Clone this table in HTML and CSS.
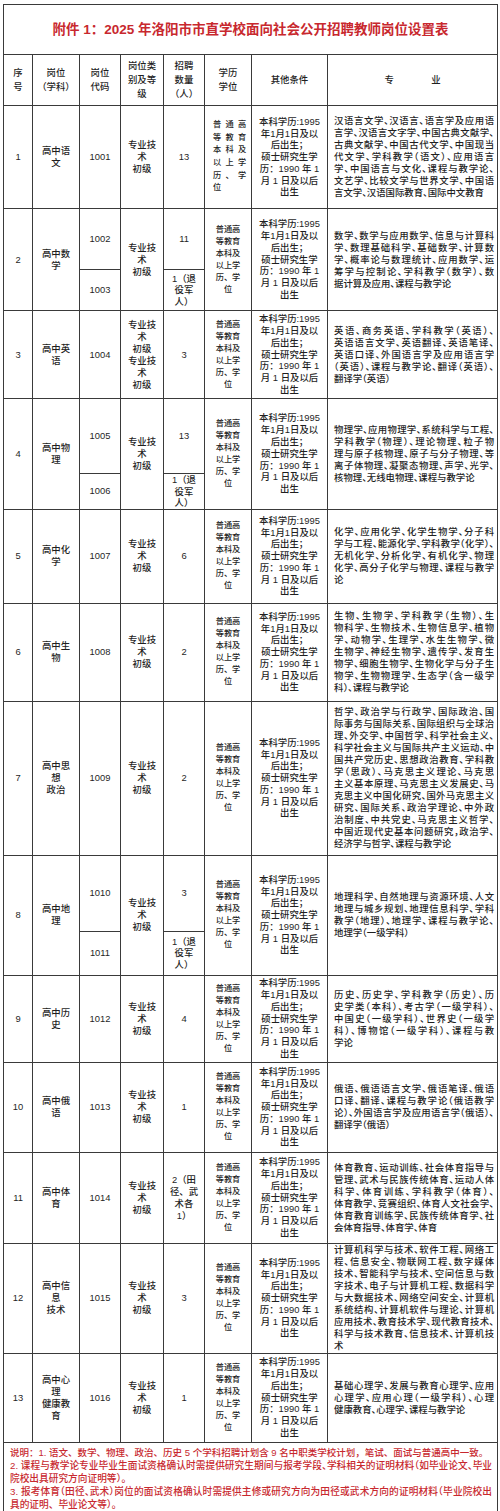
FILE: index.html
```html
<!DOCTYPE html>
<html lang="zh-CN">
<head>
<meta charset="utf-8">
<title>岗位设置表</title>
<link rel="stylesheet" href="styles.css">
</head>
<body>
<div class="page">
<table class="t">
<colgroup>
<col class="c1"><col class="c2"><col class="c3"><col class="c4"><col class="c5"><col class="c6"><col class="c7"><col class="c8">
</colgroup>
<tr class="rt"><td colspan="8" class="title">附件 1：2025 年洛阳市市直学校面向社会公开招聘教师岗位设置表</td></tr>
<tr class="rh">
<td class="hd">序<br>号</td>
<td class="hd">岗位<br>（学科）</td>
<td class="hd">岗位<br>代码</td>
<td class="hd">岗位类<br>别及等<br>级</td>
<td class="hd">招聘<br>数量<br>（人）</td>
<td class="hd">学历<br>学位</td>
<td class="hd">其他条件</td>
<td class="hd">专　　　　业</td>
</tr>

<tr class="r1">
<td>1</td><td>高中语<br>文</td><td>1001</td><td>专业技<br>术<br>初级</td><td>13</td>
<td class="edu sp">普通高<br>等教育<br>本科及<br>以上学<br>历、学<br>位</td>
<td class="cond">本科学历:1995<br>年1月1日及以<br>后出生；<br>硕士研究生学<br>历：1990 年 1<br>月 1 日及以后<br>出生</td>
<td class="spec"><span class="l">汉语言文学、汉语言、语言学及应用语</span><span class="l">言学、汉语言文字学、中国古典文献学、</span><span class="l">古典文献学、中国古代文学、中国现当</span><span class="l">代文学、学科教学（语文）、应用语言</span><span class="l">学、中国语言与文化、课程与教学论、</span><span class="l">文艺学、比较文学与世界文学、中国语</span><span class="l">言文学、汉语国际教育、国际中文教育</span></td>
</tr>

<tr class="r2a">
<td rowspan="2">2</td><td rowspan="2">高中数<br>学</td><td>1002</td><td rowspan="2">专业技<br>术<br>初级</td><td>11</td>
<td rowspan="2" class="edu">普通高<br>等教育<br>本科及<br>以上学<br>历、学<br>位</td>
<td rowspan="2" class="cond">本科学历:1995<br>年1月1日及以<br>后出生；<br>硕士研究生学<br>历：1990 年 1<br>月 1 日及以后<br>出生</td>
<td rowspan="2" class="spec"><span class="l">数学、数学与应用数学、信息与计算科</span><span class="l">学、数理基础科学、基础数学、计算数</span><span class="l">学、概率论与数理统计、应用数学、运</span><span class="l">筹学与控制论、学科教学（数学）、数</span><span class="l">据计算及应用、课程与教学论</span></td>
</tr>
<tr class="r2b"><td>1003</td><td class="q">1（退<br>役军<br>人）</td></tr>

<tr class="r3">
<td>3</td><td>高中英<br>语</td><td>1004</td><td>专业技<br>术<br>初级<br>专业技<br>术<br>初级</td><td>3</td>
<td class="edu">普通高<br>等教育<br>本科及<br>以上学<br>历、学<br>位</td>
<td class="cond">本科学历:1995<br>年1月1日及以<br>后出生；<br>硕士研究生学<br>历：1990 年 1<br>月 1 日及以后<br>出生</td>
<td class="spec"><span class="l">英语、商务英语、学科教学（英语）、</span><span class="l">英语语言文学、英语翻译、英语笔译、</span><span class="l">英语口译、外国语言学及应用语言学</span><span class="l">（英语）、课程与教学论、翻译（英语）、</span><span class="l">翻译学（英语）</span></td>
</tr>

<tr class="r4a">
<td rowspan="2">4</td><td rowspan="2">高中物<br>理</td><td>1005</td><td rowspan="2">专业技<br>术<br>初级</td><td>13</td>
<td rowspan="2" class="edu">普通高<br>等教育<br>本科及<br>以上学<br>历、学<br>位</td>
<td rowspan="2" class="cond">本科学历:1995<br>年1月1日及以<br>后出生；<br>硕士研究生学<br>历：1990 年 1<br>月 1 日及以后<br>出生</td>
<td rowspan="2" class="spec"><span class="l">物理学、应用物理学、系统科学与工程、</span><span class="l">学科教学（物理）、理论物理、粒子物</span><span class="l">理与原子核物理、原子与分子物理、等</span><span class="l">离子体物理、凝聚态物理、声学、光学、</span><span class="l">核物理、无线电物理、课程与教学论</span></td>
</tr>
<tr class="r4b"><td>1006</td><td class="q">1（退<br>役军<br>人）</td></tr>

<tr class="r5">
<td>5</td><td>高中化<br>学</td><td>1007</td><td>专业技<br>术<br>初级</td><td>6</td>
<td class="edu">普通高<br>等教育<br>本科及<br>以上学<br>历、学<br>位</td>
<td class="cond">本科学历:1995<br>年1月1日及以<br>后出生；<br>硕士研究生学<br>历：1990 年 1<br>月 1 日及以后<br>出生</td>
<td class="spec"><span class="l">化学、应用化学、化学生物学、分子科</span><span class="l">学与工程、能源化学、学科教学（化学）、</span><span class="l">无机化学、分析化学、有机化学、物理</span><span class="l">化学、高分子化学与物理、课程与教学</span><span class="l">论</span></td>
</tr>

<tr class="r6">
<td>6</td><td>高中生<br>物</td><td>1008</td><td>专业技<br>术<br>初级</td><td>2</td>
<td class="edu">普通高<br>等教育<br>本科及<br>以上学<br>历、学<br>位</td>
<td class="cond">本科学历:1995<br>年1月1日及以<br>后出生；<br>硕士研究生学<br>历：1990 年 1<br>月 1 日及以后<br>出生</td>
<td class="spec"><span class="l">生物、生物学、学科教学（生物）、生</span><span class="l">物科学、生物技术、生物信息学、植物</span><span class="l">学、动物学、生理学、水生生物学、微</span><span class="l">生物学、神经生物学、遗传学、发育生</span><span class="l">物学、细胞生物学、生物化学与分子生</span><span class="l">物学、生物物理学、生态学（含一级学</span><span class="l">科）、课程与教学论</span></td>
</tr>

<tr class="r7">
<td>7</td><td>高中思<br>想<br>政治</td><td>1009</td><td>专业技<br>术<br>初级</td><td>2</td>
<td class="edu">普通高<br>等教育<br>本科及<br>以上学<br>历、学<br>位</td>
<td class="cond">本科学历:1995<br>年1月1日及以<br>后出生；<br>硕士研究生学<br>历：1990 年 1<br>月 1 日及以后<br>出生</td>
<td class="spec"><span class="l">哲学、政治学与行政学、国际政治、国</span><span class="l">际事务与国际关系、国际组织与全球治</span><span class="l">理、外交学、中国哲学、科学社会主义、</span><span class="l">科学社会主义与国际共产主义运动、中</span><span class="l">国共产党历史、思想政治教育、学科教</span><span class="l">学（思政）、马克思主义理论、马克思</span><span class="l">主义基本原理、马克思主义发展史、马</span><span class="l">克思主义中国化研究、国外马克思主义</span><span class="l">研究、国际关系、政治学理论、中外政</span><span class="l">治制度、中共党史、马克思主义哲学、</span><span class="l">中国近现代史基本问题研究，政治学、</span><span class="l">经济学与哲学、课程与教学论</span></td>
</tr>

<tr class="r8a">
<td rowspan="2">8</td><td rowspan="2">高中地<br>理</td><td>1010</td><td rowspan="2">专业技<br>术<br>初级</td><td>3</td>
<td rowspan="2" class="edu">普通高<br>等教育<br>本科及<br>以上学<br>历、学<br>位</td>
<td rowspan="2" class="cond">本科学历:1995<br>年1月1日及以<br>后出生；<br>硕士研究生学<br>历：1990 年 1<br>月 1 日及以后<br>出生</td>
<td rowspan="2" class="spec"><span class="l">地理科学、自然地理与资源环境、人文</span><span class="l">地理与城乡规划、地理信息科学、学科</span><span class="l">教学（地理）、地理学、课程与教学论、</span><span class="l">地理学（一级学科）</span></td>
</tr>
<tr class="r8b"><td>1011</td><td class="q">1（退<br>役军<br>人）</td></tr>

<tr class="r9">
<td>9</td><td>高中历<br>史</td><td>1012</td><td>专业技<br>术<br>初级</td><td>4</td>
<td class="edu">普通高<br>等教育<br>本科及<br>以上学<br>历、学<br>位</td>
<td class="cond">本科学历:1995<br>年1月1日及以<br>后出生；<br>硕士研究生学<br>历：1990 年 1<br>月 1 日及以后<br>出生</td>
<td class="spec"><span class="l">历史、历史学、学科教学（历史）、历</span><span class="l">史学类（本科）、考古学（一级学科）、</span><span class="l">中国史（一级学科）、世界史（一级学</span><span class="l">科）、博物馆（一级学科）、课程与教</span><span class="l">学论</span></td>
</tr>

<tr class="r10">
<td>10</td><td>高中俄<br>语</td><td>1013</td><td>专业技<br>术<br>初级</td><td>1</td>
<td class="edu">普通高<br>等教育<br>本科及<br>以上学<br>历、学<br>位</td>
<td class="cond">本科学历:1995<br>年1月1日及以<br>后出生；<br>硕士研究生学<br>历：1990 年 1<br>月 1 日及以后<br>出生</td>
<td class="spec"><span class="l">俄语、俄语语言文学、俄语笔译、俄语</span><span class="l">口译、翻译、课程与教学论（俄语教学</span><span class="l">论）、外国语言学及应用语言学（俄语）、</span><span class="l">翻译学（俄语）</span></td>
</tr>

<tr class="r11">
<td>11</td><td>高中体<br>育</td><td>1014</td><td>专业技<br>术<br>初级</td><td>2（田<br>径、武<br>术各<br>1）</td>
<td class="edu">普通高<br>等教育<br>本科及<br>以上学<br>历、学<br>位</td>
<td class="cond">本科学历:1995<br>年1月1日及以<br>后出生；<br>硕士研究生学<br>历：1990 年 1<br>月 1 日及以后<br>出生</td>
<td class="spec"><span class="l">体育教育、运动训练、社会体育指导与</span><span class="l">管理、武术与民族传统体育、运动人体</span><span class="l">科学、体育训练、学科教学（体育）、</span><span class="l">体育教学、竞赛组织、体育人文社会学、</span><span class="l">体育教育训练学、民族传统体育学、社</span><span class="l">会体育指导、体育学、体育</span></td>
</tr>

<tr class="r12">
<td>12</td><td>高中信<br>息<br>技术</td><td>1015</td><td>专业技<br>术<br>初级</td><td>3</td>
<td class="edu">普通高<br>等教育<br>本科及<br>以上学<br>历、学<br>位</td>
<td class="cond">本科学历:1995<br>年1月1日及以<br>后出生；<br>硕士研究生学<br>历：1990 年 1<br>月 1 日及以后<br>出生</td>
<td class="spec"><span class="l">计算机科学与技术、软件工程、网络工</span><span class="l">程、信息安全、物联网工程、数字媒体</span><span class="l">技术、智能科学与技术、空间信息与数</span><span class="l">字技术、电子与计算机工程、数据科学</span><span class="l">与大数据技术、网络空间安全、计算机</span><span class="l">系统结构、计算机软件与理论、计算机</span><span class="l">应用技术、教育技术学、现代教育技术、</span><span class="l">科学与技术教育、信息技术、计算机技</span><span class="l">术</span></td>
</tr>

<tr class="r13">
<td>13</td><td>高中心<br>理<br>健康教<br>育</td><td>1016</td><td>专业技<br>术<br>初级</td><td>1</td>
<td class="edu">普通高<br>等教育<br>本科及<br>以上学<br>历、学<br>位</td>
<td class="cond">本科学历:1995<br>年1月1日及以<br>后出生；<br>硕士研究生学<br>历：1990 年 1<br>月 1 日及以后<br>出生</td>
<td class="spec"><span class="l">基础心理学、发展与教育心理学、应用</span><span class="l">心理学、应用心理（一级学科）、心理</span><span class="l">健康教育、心理学、课程与教学论</span></td>
</tr>

<tr class="rn">
<td colspan="8" class="notes">
<span class="nl n1">说明：1. 语文、数学、物理、政治、历史 5 个学科招聘计划含 9 名中职类学校计划，笔试、面试与普通高中一致。</span>
<span class="nl j">2. 课程与教学论专业毕业生面试资格确认时需提供研究生期间与报考学段、学科相关的证明材料（如毕业论文、毕业</span>
<span class="nl">院校出具研究方向证明等）。</span>
<span class="nl j">3. 报考体育（田径、武术）岗位的面试资格确认时需提供主修或研究方向为田径或武术方向的证明材料（毕业院校出</span>
<span class="nl">具的证明、毕业论文等）。</span>
</td>
</tr>
</table>
</div>
</body>
</html>
```
FILE: styles.css
```css
html, body {
  margin: 0;
  padding: 0;
  background: #ffffff;
}
body {
  font-family: "Liberation Sans", "Noto Sans CJK SC", sans-serif;
  color: #1f1f1f;
}
.page {
  padding: 4px 3px 3px 3px;
}
.t {
  width: 494px;
  border-collapse: collapse;
  table-layout: fixed;
}
.c1 { width: 29px; }
.c2 { width: 47px; }
.c3 { width: 41px; }
.c4 { width: 43px; }
.c5 { width: 41px; }
.c6 { width: 47px; }
.c7 { width: 76px; }
.c8 { width: 170px; }

.t td {
  border: 1px solid #3a3a3a;
  padding: 0;
  text-align: center;
  vertical-align: middle;
  font-size: 9.4px;
  font-weight: 500;
  line-height: 12px;
  overflow: hidden;
}
.t td.title {
  font-size: 13.5px;
  font-weight: 700;
  color: #c8282e;
  line-height: 16px;
  padding-top: 1px;
}
.t td.hd {
  line-height: 14px;
}
.t td.edu {
  font-size: 8.2px;
}
.t td.edu.sp {
  text-align: left;
  letter-spacing: 4.3px;
  padding-left: 8px;
  line-height: 12.6px;
}
.t td.cond {
  line-height: 11.8px;
}
.t td.q {
  line-height: 11.5px;
}
.t td.spec {
  text-align: left;
  padding: 0 3px 0 6px;
  font-feature-settings: "halt";
}
.spec .l {
  display: block;
  white-space: nowrap;
  text-align: justify;
  text-align-last: justify;
}
.spec .l:last-child {
  text-align-last: left;
}
.t td.notes {
  text-align: left;
  color: #c8282e;
  font-size: 9.7px;
  line-height: 13px;
  padding: 3px 5px 2px 6px;
}
.nl {
  display: block;
  white-space: nowrap;
}
.nl.n1 {
  font-size: 9.5px;
}
.nl.j {
  text-align: justify;
  text-align-last: justify;
  font-feature-settings: "halt";
}

.rt { height: 50px; }
.rh { height: 51px; }
.r1 { height: 103px; }
.r2a { height: 61px; }
.r2b { height: 41px; }
.r3 { height: 88px; }
.r4a { height: 75px; }
.r4b { height: 35px; }
.r5 { height: 94px; }
.r6 { height: 98px; }
.r7 { height: 154px; }
.r8a { height: 76px; }
.r8b { height: 44px; }
.r9 { height: 87px; }
.r10 { height: 90px; }
.r11 { height: 91px; }
.r12 { height: 110px; }
.r13 { height: 89px; }
.rn { height: 67px; }
```
